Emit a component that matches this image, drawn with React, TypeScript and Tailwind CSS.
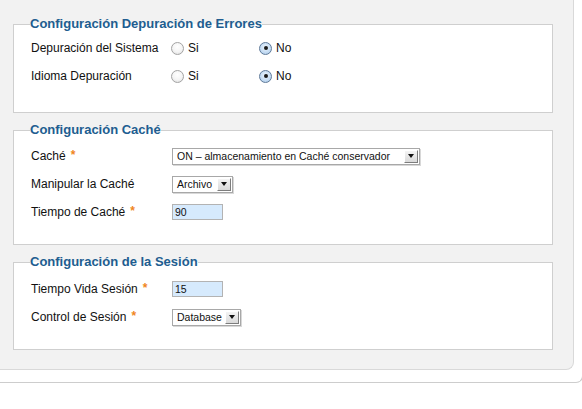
import React from "react";

function Star() {
  return <span className="ml-[5px] font-bold text-[#f0861c] text-[12px] relative top-[-1px]">*</span>;
}

function Radio({ checked }: { checked?: boolean }) {
  return checked ? (
    <span className="w-[13px] h-[13px] rounded-full border border-[#5f7a99] bg-[radial-gradient(circle_at_50%_40%,#eef6fe_0%,#bcd6f0_70%,#9fbfe0_100%)] flex items-center justify-center shrink-0">
      <span className="w-[4px] h-[4px] rounded-full bg-[#1a1a1a]" />
    </span>
  ) : (
    <span className="w-[13px] h-[13px] rounded-full border border-[#a3a3a3] bg-[radial-gradient(circle_at_50%_35%,#ffffff_0%,#f4f4f4_55%,#d9d9d9_100%)] shrink-0" />
  );
}

function RadioPair() {
  return (
    <div className="flex items-center">
      <div className="w-[88px] flex items-center gap-[4px]">
        <Radio />
        <span>Si</span>
      </div>
      <div className="flex items-center gap-[4px]">
        <Radio checked />
        <span>No</span>
      </div>
    </div>
  );
}

function Select({ value, width }: { value: string; width: string }) {
  return (
    <div className={`ml-[1px] h-[17px] flex items-center bg-white border border-[#a8a8a8] shadow-[1px_1px_0_#d8d8d8] ${width}`}>
      <span className="flex-1 pl-[4px] text-[10.5px] leading-[15px] text-[#111] whitespace-nowrap overflow-hidden">{value}</span>
      <span className="w-[14px] h-[13px] mr-[1px] bg-[linear-gradient(#f4f4f4,#d9d9d9)] border-t border-l border-[#ffffff] border-r-[#7d7d7d] border-b-[#7d7d7d] border-r border-b flex items-center justify-center">
        <span className="w-0 h-0 border-l-[3.5px] border-r-[3.5px] border-t-[4px] border-l-transparent border-r-transparent border-t-[#111]" />
      </span>
    </div>
  );
}

function Input({ value }: { value: string }) {
  return (
    <div className="ml-[1px] w-[51px] h-[16px] bg-[#d6eafd] border border-[#b3b3b3] pl-[2px] text-[10.5px] leading-[14px] text-[#111]">
      {value}
    </div>
  );
}

function Row({ label, star, children }: { label: string; star?: boolean; children: React.ReactNode }) {
  return (
    <div className="flex items-center h-[28px]">
      <div className="w-[140px] shrink-0 flex items-center">
        <span>{label}</span>
        {star && <Star />}
      </div>
      {children}
    </div>
  );
}

function Box({ title, children, inner }: { title: string; children: React.ReactNode; inner: string }) {
  return (
    <fieldset className="w-[540px] border border-[#cfcfcf] bg-white">
      <legend className="ml-[16px] px-0 text-[13px] leading-[14px] font-bold text-[#215d90]">{title}</legend>
      <div className={`pl-[17px] ${inner}`}>{children}</div>
    </fieldset>
  );
}

export default function App() {
  return (
    <div className="w-[582px] h-[409px] bg-white overflow-hidden text-[12px] text-[#111] font-['Liberation_Sans',Arial,sans-serif]">
      <div className="w-[583px] pb-[12px] border-b border-r border-[#cdcdcd] rounded-br-[7px]">
        <div className="w-[574px] bg-[#f2f2f2] border-r border-b border-[#d9d9d9] rounded-br-[8px] pl-[13px] pt-[17px] pb-[19px] flex flex-col gap-[10px]">
          <Box title="Configuración Depuración de Errores" inner="pt-[3px] pb-[22px]">
            <Row label="Depuración del Sistema">
              <RadioPair />
            </Row>
            <Row label="Idioma Depuración">
              <RadioPair />
            </Row>
          </Box>
          <Box title="Configuración Caché" inner="pt-[5px] pb-[18px]">
            <Row label="Caché" star>
              <Select value="ON – almacenamiento en Caché conservador" width="w-[248px]" />
            </Row>
            <Row label="Manipular la Caché">
              <Select value="Archivo" width="w-[61px]" />
            </Row>
            <Row label="Tiempo de Caché" star>
              <Input value="90" />
            </Row>
          </Box>
          <Box title="Configuración de la Sesión" inner="pt-[6px] pb-[18px]">
            <Row label="Tiempo Vida Sesión" star>
              <Input value="15" />
            </Row>
            <Row label="Control de Sesión" star>
              <Select value="Database" width="w-[69px]" />
            </Row>
          </Box>
        </div>
      </div>
    </div>
  );
}
